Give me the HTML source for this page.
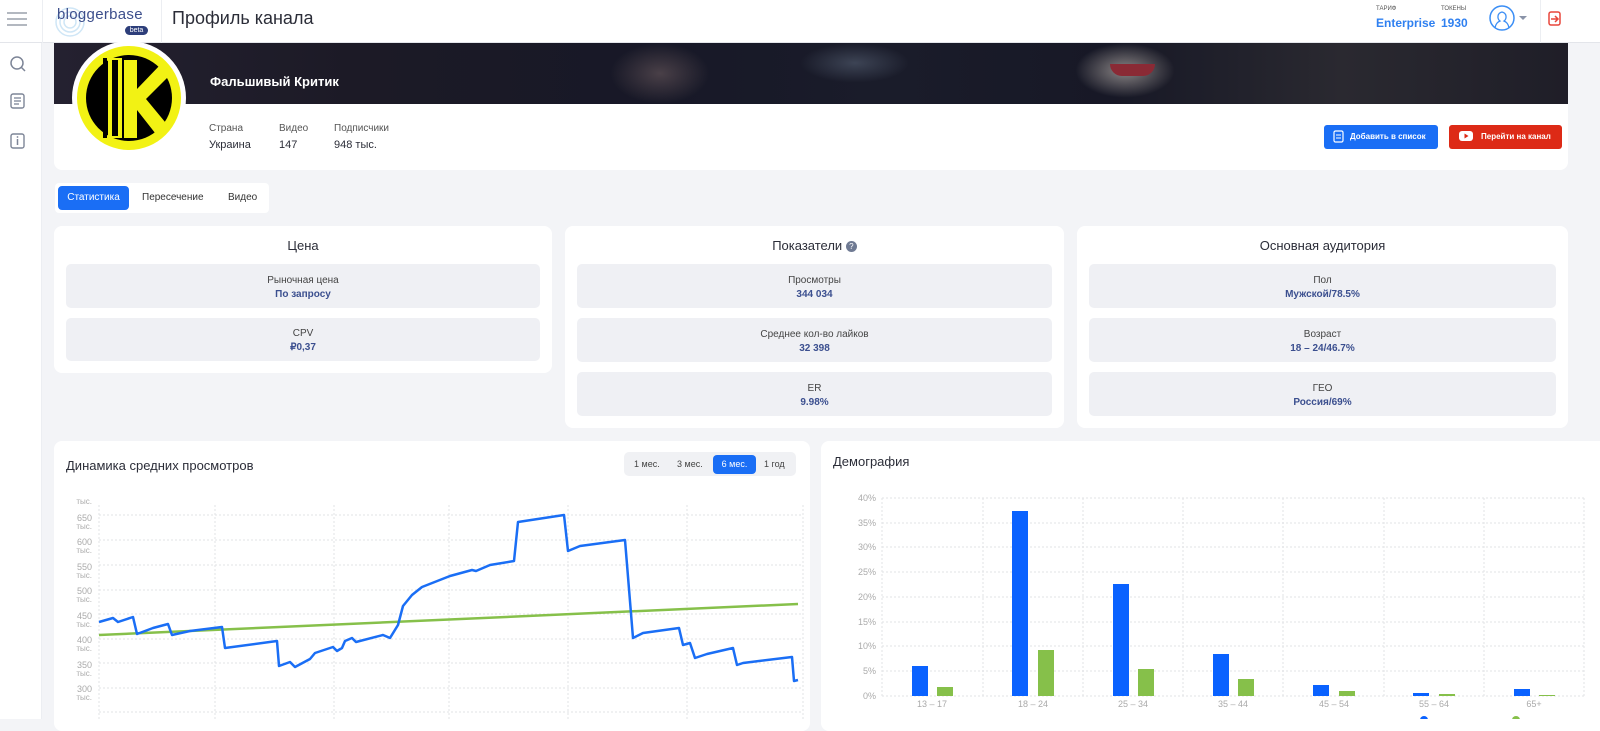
<!DOCTYPE html>
<html><head><meta charset="utf-8">
<style>
*{margin:0;padding:0;box-sizing:border-box}
body{width:1600px;height:719px;overflow:hidden;background:#f3f4f7;font-family:"Liberation Sans",sans-serif;color:#2b2d38;position:relative}
.a{position:absolute}
.card{position:absolute;background:#fff;border-radius:8px}
.box{position:absolute;background:#eff0f4;border-radius:5px;text-align:center;font-size:10px;color:#444}
.box b{display:block;color:#3b4f8f;font-weight:bold;margin-top:3px;font-size:10px}
.h{font-size:13px;text-align:center;color:#2b2d38}
</style></head><body>
<div class="a" style="left:0;top:0;width:1600px;height:43px;background:#fff;border-bottom:1px solid #e3e5ea"></div>
<div class="a" style="left:0;top:43px;width:42px;height:676px;background:#fff;border-right:1px solid #eceef2"></div>
<div class="a" style="left:42px;top:0;width:1px;height:43px;background:#eceef2"></div>
<div class="a" style="left:161px;top:0;width:1px;height:43px;background:#eceef2"></div>
<div class="a" style="left:1540px;top:0;width:1px;height:43px;background:#eceef2"></div>
<svg class="a" style="left:6px;top:10px" width="22" height="20"><g stroke="#9aa0ac" stroke-width="1.5"><line x1="1" y1="3" x2="21" y2="3"/><line x1="1" y1="9" x2="21" y2="9"/><line x1="1" y1="15" x2="21" y2="15"/></g></svg>
<svg class="a" style="left:54px;top:4px" width="32" height="34"><g fill="none" stroke="#cfe6f6" stroke-width="1.5"><circle cx="16" cy="18" r="6"/><circle cx="16" cy="18" r="10"/><circle cx="16" cy="18" r="14"/></g></svg>
<div class="a" style="left:57px;top:6px;font-size:15px;color:#3d4f8c;letter-spacing:0.3px">bloggerbase</div>
<div class="a" style="left:125px;top:26px;width:23px;height:9px;border-radius:5px;background:#2d3e7a;color:#fff;font-size:7px;text-align:center;line-height:9px">beta</div>
<div class="a" style="left:172px;top:8px;font-size:18px;color:#2b2d38">Профиль канала</div>
<div class="a" style="left:1376px;top:6px;font-size:6px;color:#555">ТАРИФ</div>
<div class="a" style="left:1376px;top:16px;font-size:12px;color:#2f80f0;font-weight:bold">Enterprise</div>
<div class="a" style="left:1441px;top:6px;font-size:6px;color:#555">ТОКЕНЫ</div>
<div class="a" style="left:1441px;top:16px;font-size:12px;color:#2f80f0;font-weight:bold">1930</div>
<svg class="a" style="left:1489px;top:5px" width="40" height="28"><circle cx="13" cy="13" r="12" fill="none" stroke="#3b8ef5" stroke-width="1.5"/><path d="M6 23 C7 18 9 17 11 16 C8 14 8 8 13 7 C18 8 18 14 15 16 C17 17 19 18 20 23" fill="none" stroke="#3b8ef5" stroke-width="1.3"/><path d="M30 11 L38 11 L34 15 Z" fill="#8a93a8"/></svg>
<svg class="a" style="left:1548px;top:11px" width="14" height="16"><rect x="1" y="1" width="11" height="13" rx="2" fill="none" stroke="#e8463b" stroke-width="1.5"/><path d="M3 8 H10 M7 5 L10 8 L7 11" fill="none" stroke="#e8463b" stroke-width="1.5"/></svg>
<svg class="a" style="left:9px;top:55px" width="18" height="18"><circle cx="8" cy="8" r="6" fill="none" stroke="#7d8597" stroke-width="1.5"/><line x1="12.5" y1="12.5" x2="16" y2="16" stroke="#7d8597" stroke-width="1.5"/></svg>
<svg class="a" style="left:10px;top:93px" width="16" height="16"><rect x="1" y="1" width="13" height="14" rx="2" fill="none" stroke="#7d8597" stroke-width="1.4"/><g stroke="#7d8597" stroke-width="1.3"><line x1="4" y1="5" x2="11" y2="5"/><line x1="4" y1="8" x2="11" y2="8"/><line x1="4" y1="11" x2="9" y2="11"/></g></svg>
<svg class="a" style="left:10px;top:133px" width="16" height="16"><rect x="1" y="1" width="13" height="14" rx="2" fill="none" stroke="#7d8597" stroke-width="1.4"/><line x1="7.5" y1="6" x2="7.5" y2="12" stroke="#7d8597" stroke-width="1.5"/><circle cx="7.5" cy="4" r="0.9" fill="#7d8597"/></svg>
<div class="a" style="left:54px;top:43px;width:1514px;height:61px;background:linear-gradient(90deg,#242130 0%,#1c1a26 20%,#171827 40%,#1a1c2a 55%,#171826 70%,#2a2930 85%,#1f1e28 100%)"></div>
<div class="a" style="left:610px;top:43px;width:100px;height:61px;background:radial-gradient(ellipse at center,#4a4048 0%,rgba(40,35,45,0) 70%)"></div>
<div class="a" style="left:800px;top:43px;width:110px;height:40px;background:radial-gradient(ellipse at center,#3d4455 0%,rgba(30,30,45,0) 70%)"></div>
<div class="a" style="left:1075px;top:43px;width:100px;height:55px;background:radial-gradient(ellipse at center,#8a8585 0%,rgba(60,55,60,0) 70%)"></div>
<div class="a" style="left:1110px;top:64px;width:45px;height:12px;border-radius:0 0 20px 20px;background:#8a2a35"></div>
<div class="a" style="left:210px;top:74px;font-size:13px;color:#fff;font-weight:bold">Фальшивый Критик</div>
<div class="card" style="left:54px;top:104px;width:1514px;height:66px;border-radius:0 0 8px 8px"></div>
<div class="a" style="left:72px;top:41px;width:114px;height:114px;border-radius:50%;background:#fff"></div>
<svg class="a" style="left:75px;top:44px" width="108" height="108"><circle cx="54" cy="54" r="52" fill="#f2f214"/><circle cx="54" cy="54" r="43" fill="#000"/><rect x="33" y="14" width="14" height="80" fill="#f2f214"/><rect x="37" y="16" width="6" height="76" fill="#000"/><path d="M49 16 L62 16 L62 45 L86 20 L96 30 L71 55 L95 84 L84 94 L62 66 L62 94 L49 94 Z" fill="#f2f214"/><rect x="28" y="14" width="4" height="80" fill="#000"/></svg>
<div class="a" style="left:209px;top:123px;font-size:10px;color:#555">Страна</div>
<div class="a" style="left:209px;top:139px;font-size:11px;color:#2b2d38">Украина</div>
<div class="a" style="left:279px;top:123px;font-size:10px;color:#555">Видео</div>
<div class="a" style="left:279px;top:139px;font-size:11px;color:#2b2d38">147</div>
<div class="a" style="left:334px;top:123px;font-size:10px;color:#555">Подписчики</div>
<div class="a" style="left:334px;top:139px;font-size:11px;color:#2b2d38">948 тыс.</div>
<div class="a" style="left:1324px;top:125px;width:114px;height:24px;background:#1a6ef5;border-radius:3px;color:#fff;font-size:8px;font-weight:bold;line-height:24px;padding-left:26px">Добавить в список</div>
<svg class="a" style="left:1333px;top:130px" width="12" height="14"><rect x="1" y="1" width="9" height="11" rx="1.5" fill="none" stroke="#fff" stroke-width="1.2"/><line x1="3" y1="5" x2="8" y2="5" stroke="#fff"/><line x1="3" y1="8" x2="8" y2="8" stroke="#fff"/></svg>
<div class="a" style="left:1449px;top:125px;width:113px;height:24px;background:#dd2a16;border-radius:3px;color:#fff;font-size:8px;font-weight:bold;line-height:24px;padding-left:32px">Перейти на канал</div>
<svg class="a" style="left:1459px;top:131px" width="14" height="11"><rect x="0" y="0" width="14" height="10" rx="3" fill="#fff"/><path d="M5.5 2.5 L9.5 5 L5.5 7.5Z" fill="#dd2a16"/></svg>
<div class="a" style="left:55px;top:183px;width:214px;height:30px;background:#fff;border-radius:4px"></div>
<div class="a" style="left:58px;top:186px;width:71px;height:24px;background:#1a6ef5;border-radius:4px;color:#fff;font-size:10px;text-align:center;line-height:24px">Статистика</div>
<div class="a" style="left:142px;top:192px;font-size:10px;color:#333">Пересечение</div>
<div class="a" style="left:228px;top:192px;font-size:10px;color:#333">Видео</div>
<div class="card" style="left:54px;top:226px;width:498px;height:147px"></div>
<div class="h a" style="left:54px;top:238px;width:498px">Цена</div>
<div class="box" style="left:66px;top:264px;width:474px;height:44px;padding-top:11px">Рыночная цена<b>По запросу</b></div>
<div class="box" style="left:66px;top:318px;width:474px;height:43px;padding-top:10px">CPV<b>₽0,37</b></div>
<div class="card" style="left:565px;top:226px;width:499px;height:202px"></div>
<div class="h a" style="left:565px;top:238px;width:499px">Показатели <span style="display:inline-block;width:11px;height:11px;border-radius:50%;background:#6f7a93;color:#fff;font-size:8px;line-height:11px;vertical-align:1px">?</span></div>
<div class="box" style="left:577px;top:264px;width:475px;height:44px;padding-top:11px">Просмотры<b>344 034</b></div>
<div class="box" style="left:577px;top:318px;width:475px;height:44px;padding-top:11px">Среднее кол-во лайков<b>32 398</b></div>
<div class="box" style="left:577px;top:372px;width:475px;height:44px;padding-top:11px">ER<b>9.98%</b></div>
<div class="card" style="left:1077px;top:226px;width:491px;height:202px"></div>
<div class="h a" style="left:1077px;top:238px;width:491px">Основная аудитория</div>
<div class="box" style="left:1089px;top:264px;width:467px;height:44px;padding-top:11px">Пол<b>Мужской/78.5%</b></div>
<div class="box" style="left:1089px;top:318px;width:467px;height:44px;padding-top:11px">Возраст<b>18 – 24/46.7%</b></div>
<div class="box" style="left:1089px;top:372px;width:467px;height:44px;padding-top:11px">ГЕО<b>Россия/69%</b></div>
<div class="card" style="left:54px;top:441px;width:756px;height:290px"></div>
<div class="a" style="left:66px;top:458px;font-size:13px;color:#2b2d38">Динамика средних просмотров</div>
<div class="a" style="left:624px;top:452px;width:172px;height:24px;background:#f0f1f4;border-radius:5px"></div>
<div class="a" style="left:634px;top:459px;font-size:9px;color:#444">1 мес.</div>
<div class="a" style="left:677px;top:459px;font-size:9px;color:#444">3 мес.</div>
<div class="a" style="left:713px;top:455px;width:43px;height:19px;background:#1a6ef5;border-radius:4px;color:#fff;font-size:9px;text-align:center;line-height:19px">6 мес.</div>
<div class="a" style="left:764px;top:459px;font-size:9px;color:#444">1 год</div>
<svg class="a" style="left:54px;top:441px" width="756" height="278">
<g transform="translate(-54,-441)">
<g stroke="#e2e3e6" stroke-dasharray="2,2" stroke-width="1">
<line x1="99" y1="515" x2="803" y2="515"/><line x1="99" y1="540" x2="803" y2="540"/><line x1="99" y1="565" x2="803" y2="565"/><line x1="99" y1="590" x2="803" y2="590"/><line x1="99" y1="614" x2="803" y2="614"/><line x1="99" y1="639" x2="803" y2="639"/><line x1="99" y1="663" x2="803" y2="663"/><line x1="99" y1="688" x2="803" y2="688"/><line x1="99" y1="712" x2="803" y2="712"/>
<line x1="99" y1="505" x2="99" y2="719"/><line x1="215" y1="505" x2="215" y2="719"/><line x1="334" y1="505" x2="334" y2="719"/><line x1="449" y1="505" x2="449" y2="719"/><line x1="568" y1="505" x2="568" y2="719"/><line x1="687" y1="505" x2="687" y2="719"/><line x1="803" y1="505" x2="803" y2="719"/>
</g>
<g font-size="8" fill="#aaa" text-anchor="end" font-family="Liberation Sans,sans-serif">
<text x="92" y="504">тыс.</text>
<text x="92" y="521" font-size="9">650</text><text x="92" y="529">тыс.</text>
<text x="92" y="545" font-size="9">600</text><text x="92" y="553">тыс.</text>
<text x="92" y="570" font-size="9">550</text><text x="92" y="578">тыс.</text>
<text x="92" y="594" font-size="9">500</text><text x="92" y="602">тыс.</text>
<text x="92" y="619" font-size="9">450</text><text x="92" y="627">тыс.</text>
<text x="92" y="643" font-size="9">400</text><text x="92" y="651">тыс.</text>
<text x="92" y="668" font-size="9">350</text><text x="92" y="676">тыс.</text>
<text x="92" y="692" font-size="9">300</text><text x="92" y="700">тыс.</text>
</g>
<line x1="99" y1="635" x2="798" y2="604" stroke="#86c04a" stroke-width="2.5"/>
<polyline fill="none" stroke="#1a6ef5" stroke-width="2.5" stroke-linejoin="round" points="99,622 113,618 118,622 133,617 137,634 153,628 168,624 172,635 190,631 222,627 225,648 277,641 279,666 290,662 295,667 310,659 315,653 333,647 337,651 342,648 345,641 352,638 356,642 383,635 390,638 398,625 403,606 412,595 422,587 450,576 472,570 476,571 490,565 514,561 518,522 564,515 568,551 580,546 625,540 633,638 643,633 679,628 683,645 690,643 695,658 707,654 733,648 737,665 743,663 792,657 794,681 798,680"/>
</g></svg>
<div class="card" style="left:821px;top:441px;width:800px;height:290px"></div>
<div class="a" style="left:833px;top:454px;font-size:13px;color:#2b2d38">Демография</div>
<svg class="a" style="left:821px;top:441px" width="779" height="278">
<g transform="translate(-821,-441)">
<g stroke="#e2e3e6" stroke-dasharray="2,2" stroke-width="1">
<line x1="882" y1="498" x2="1584" y2="498"/><line x1="882" y1="523" x2="1584" y2="523"/><line x1="882" y1="547" x2="1584" y2="547"/><line x1="882" y1="572" x2="1584" y2="572"/><line x1="882" y1="597" x2="1584" y2="597"/><line x1="882" y1="622" x2="1584" y2="622"/><line x1="882" y1="646" x2="1584" y2="646"/><line x1="882" y1="671" x2="1584" y2="671"/><line x1="882" y1="696" x2="1584" y2="696"/>
<line x1="882" y1="498" x2="882" y2="696"/><line x1="983" y1="498" x2="983" y2="696"/><line x1="1083" y1="498" x2="1083" y2="696"/><line x1="1183" y1="498" x2="1183" y2="696"/><line x1="1283" y1="498" x2="1283" y2="696"/><line x1="1384" y1="498" x2="1384" y2="696"/><line x1="1484" y1="498" x2="1484" y2="696"/><line x1="1584" y1="498" x2="1584" y2="696"/>
</g>
<g font-size="9" fill="#aaa" text-anchor="end" font-family="Liberation Sans,sans-serif">
<text x="876" y="501">40%</text><text x="876" y="526">35%</text><text x="876" y="550">30%</text><text x="876" y="575">25%</text><text x="876" y="600">20%</text><text x="876" y="625">15%</text><text x="876" y="649">10%</text><text x="876" y="674">5%</text><text x="876" y="699">0%</text>
</g>
<g fill="#0a62ff">
<rect x="912" y="666" width="16" height="30"/><rect x="1012" y="511" width="16" height="185"/><rect x="1113" y="584" width="16" height="112"/><rect x="1213" y="654" width="16" height="42"/><rect x="1313" y="685" width="16" height="11"/><rect x="1413" y="693" width="16" height="3"/><rect x="1514" y="689" width="16" height="7"/>
</g>
<g fill="#86c04a">
<rect x="937" y="687" width="16" height="9"/><rect x="1038" y="650" width="16" height="46"/><rect x="1138" y="669" width="16" height="27"/><rect x="1238" y="679" width="16" height="17"/><rect x="1339" y="691" width="16" height="5"/><rect x="1439" y="694" width="16" height="2"/><rect x="1539" y="695" width="16" height="1"/>
</g>
<g font-size="9" fill="#aaa" text-anchor="middle" font-family="Liberation Sans,sans-serif">
<text x="932" y="707">13 – 17</text><text x="1033" y="707">18 – 24</text><text x="1133" y="707">25 – 34</text><text x="1233" y="707">35 – 44</text><text x="1334" y="707">45 – 54</text><text x="1434" y="707">55 – 64</text><text x="1534" y="707">65+</text>
</g>
<circle cx="1424" cy="720" r="4" fill="#0a62ff"/><circle cx="1516" cy="720" r="4" fill="#86c04a"/>
</g></svg>
</body></html>
